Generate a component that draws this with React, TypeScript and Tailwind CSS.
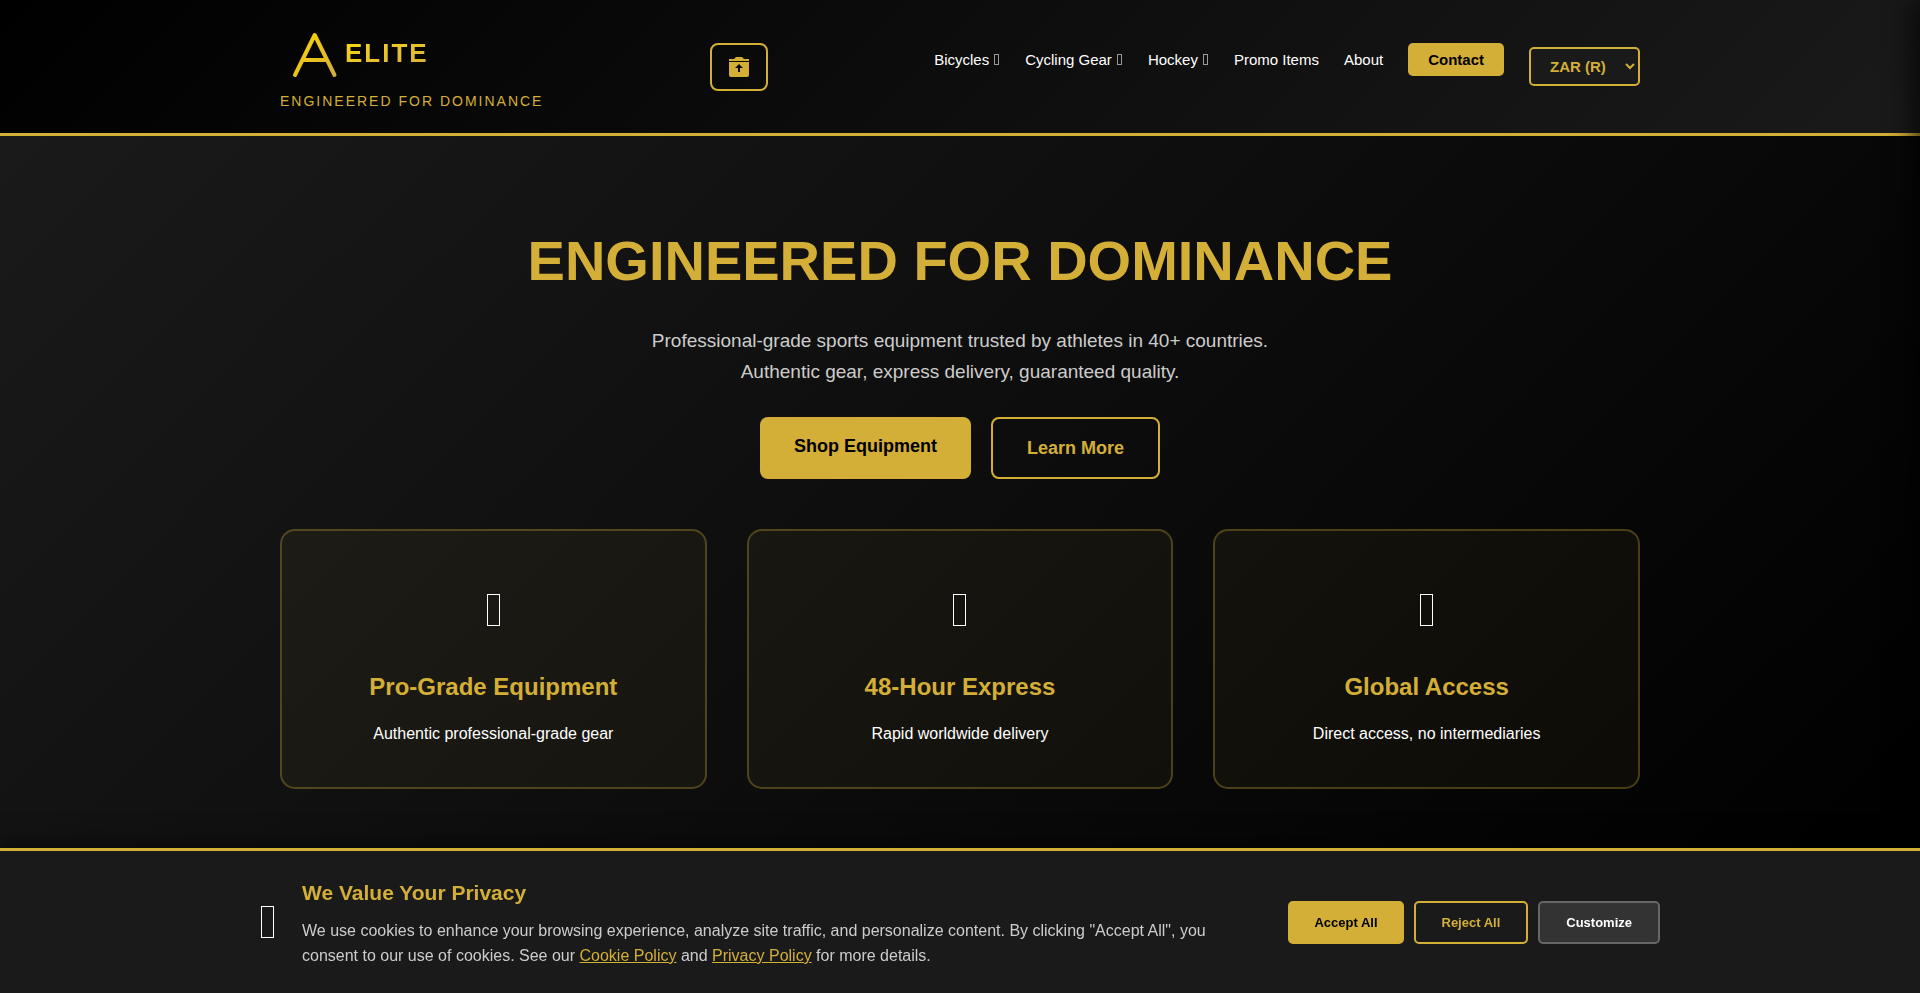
import React from "react";

const navLinks = [
  { label: "Bicycles", menu: true },
  { label: "Cycling Gear", menu: true },
  { label: "Hockey", menu: true },
  { label: "Promo Items", menu: false },
  { label: "About", menu: false },
];

const features = [
  { title: "Pro-Grade Equipment", text: "Authentic professional-grade gear" },
  { title: "48-Hour Express", text: "Rapid worldwide delivery" },
  { title: "Global Access", text: "Direct access, no intermediaries" },
];

function BoxGlyph() {
  return <span aria-hidden="true" className="block h-8 w-[13px] border border-white" />;
}

function Logo() {
  return (
    <a href="#" className="block">
      <span className="flex h-[56px] items-center gap-[6px] pl-[11px]">
        <svg width="48" height="52" viewBox="0 0 48 52" fill="none" aria-hidden="true">
          <defs>
            <linearGradient id="gold" x1="0" y1="0" x2="1" y2="1">
              <stop offset="0" stopColor="#ffd700" />
              <stop offset="1" stopColor="#d4af37" />
            </linearGradient>
          </defs>
          <path
            d="M4 48 23.700 8 43.500 48M12.500 33h22.500"
            stroke="url(#gold)"
            strokeWidth="4"
            strokeLinecap="round"
            strokeLinejoin="round"
          />
        </svg>
        <span className="bg-linear-to-br from-[#ffd700] to-[#d4af37] bg-clip-text text-[26px] leading-[30px] font-bold tracking-[2px] text-transparent">
          ELITE
        </span>
      </span>
      <span className="mt-[9px] block text-[14px] leading-[22px] tracking-[2px] text-[#d4af37]">
        ENGINEERED FOR DOMINANCE
      </span>
    </a>
  );
}

function Header() {
  return (
    <header className="border-b-[3px] border-[#d4af37] bg-[linear-gradient(135deg,#000000,#1a1a1a)]">
      <div className="mx-auto flex max-w-[1400px] items-start justify-between px-5 pt-[25px] pb-[21px]">
        <Logo />
        <button
          type="button"
          aria-label="Cart"
          className="mt-[18px] flex h-12 w-[58px] items-center justify-center rounded-lg border-2 border-[#d4af37]"
        >
          <svg width="20" height="20" viewBox="0 0 20 20" fill="#d4af37" aria-hidden="true">
            <path d="M0 2h5l2-2h6l2 2h5v2H0z" />
            <path
              fillRule="evenodd"
              d="M0 5h20v13a2 2 0 0 1-2 2H2a2 2 0 0 1-2-2zm9 10h2v-4h3l-4-4-4 4h3z"
            />
          </svg>
        </button>
        <nav className="mt-[18px] flex items-start gap-[25px] text-[15px] leading-[33px] text-white">
          {navLinks.map((link) => (
            <a key={link.label} href="#">
              {link.label}
              {link.menu && (
                <span
                  aria-hidden="true"
                  className="mr-px ml-[5px] inline-block h-[11px] w-[5px] border border-[#999999]"
                />
              )}
            </a>
          ))}
          <a href="#" className="rounded-[5px] bg-[#d4af37] px-5 font-bold text-black">
            Contact
          </a>
          <select
            aria-label="Currency"
            className="mt-1 h-[39px] w-[111px] rounded-[5px] border-2 border-[#d4af37] bg-[#1a1a1a] pl-[15px] text-[15px] leading-[20px] font-bold text-[#d4af37]"
          >
            <option>ZAR (R)</option>
          </select>
        </nav>
      </div>
    </header>
  );
}

function Hero() {
  return (
    <main className="bg-[linear-gradient(135deg,#1a1a1a,#000000)] py-20">
      <div className="mx-auto max-w-[1400px] px-5 text-center">
        <h1 className="mb-5 text-[56px] leading-[89px] font-bold text-[#d4af37]">
          ENGINEERED FOR DOMINANCE
        </h1>
        <p className="mb-[30px] text-[19px] leading-[31px] text-[#cccccc]">
          Professional-grade sports equipment trusted by athletes in 40+ countries.
          <br />
          Authentic gear, express delivery, guaranteed quality.
        </p>
        <div className="flex justify-center gap-5 text-[18px] leading-[28px] font-bold">
          <a href="#" className="rounded-lg bg-[#d4af37] px-[34px] py-[15px] text-black">
            Shop Equipment
          </a>
          <a
            href="#"
            className="rounded-lg border-2 border-[#d4af37] px-[34px] py-[15px] text-[#d4af37]"
          >
            Learn More
          </a>
        </div>
        <div className="mt-[50px] grid grid-cols-3 gap-10">
          {features.map((f) => (
            <section
              key={f.title}
              className="rounded-[15px] border-2 border-[#d4af37]/30 bg-[#d4af37]/5 p-10"
            >
              <div className="mb-5 flex h-[77px] items-center justify-center">
                <BoxGlyph />
              </div>
              <h2 className="mb-[15px] text-[24px] leading-[38px] font-bold text-[#d4af37]">
                {f.title}
              </h2>
              <p className="text-[16px] leading-[26px] text-white">{f.text}</p>
            </section>
          ))}
        </div>
      </div>
    </main>
  );
}

function CookieBanner() {
  return (
    <aside
      aria-label="Cookie consent"
      className="fixed inset-x-0 bottom-0 border-t-[3px] border-[#d4af37] bg-[#1a1a1a] py-[25px] shadow-[0_-5px_20px_rgba(0,0,0,0.5)]"
    >
      <div className="mx-auto flex max-w-[1400px] items-center gap-7">
        <div className="pl-px">
          <BoxGlyph />
        </div>
        <div className="flex-1">
          <h2 className="mb-2 text-[21px] leading-[34px] font-bold text-[#d4af37]">
            We Value Your Privacy
          </h2>
          <p className="max-w-[930px] text-[16px] leading-[25px] text-[#cccccc]">
            We use cookies to enhance your browsing experience, analyze site traffic, and
            personalize content. By clicking "Accept All", you consent to our use of cookies. See
            our{" "}
            <a href="#" className="text-[#d4af37] underline">
              Cookie Policy
            </a>{" "}
            and{" "}
            <a href="#" className="text-[#d4af37] underline">
              Privacy Policy
            </a>{" "}
            for more details.
          </p>
        </div>
        <div className="flex gap-[10px] text-[13px] leading-[15px] font-bold">
          <button type="button" className="rounded-[5px] bg-[#d4af37] px-[26px] text-black">
            Accept All
          </button>
          <button
            type="button"
            className="rounded-[5px] border-2 border-[#d4af37] px-[26px] py-3 text-[#d4af37]"
          >
            Reject All
          </button>
          <button
            type="button"
            className="rounded-[5px] border-2 border-[#666666] bg-[#333333] px-[26px] py-3 text-white"
          >
            Customize
          </button>
        </div>
      </div>
    </aside>
  );
}

export default function App() {
  return (
    <div className="min-h-screen bg-black font-['Liberation_Sans',sans-serif]">
      <Header />
      <Hero />
      <div className="fixed inset-y-0 left-full w-20 shadow-[-5px_0_30px_rgba(0,0,0,0.8)]" />
      <CookieBanner />
    </div>
  );
}
